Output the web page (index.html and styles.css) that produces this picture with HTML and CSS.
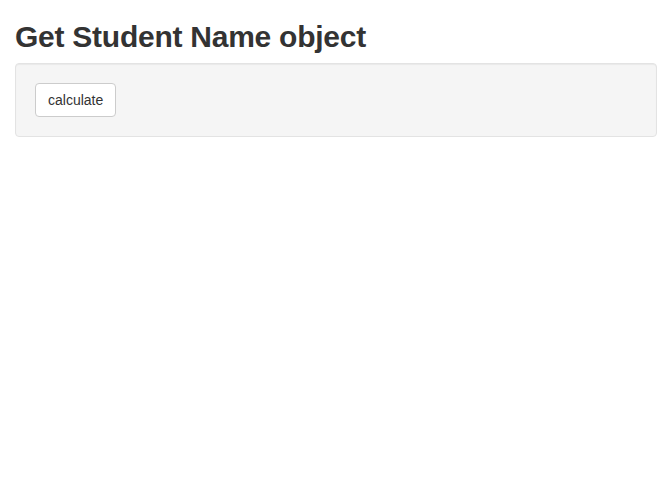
FILE: index.html
```html
<!DOCTYPE html>
<html>
<head>
<meta charset="utf-8">
<link rel="stylesheet" href="styles.css">
</head>
<body>
<div class="container">
  <h2 class="title">Get Student Name object</h2>
  <div class="well">
    <button class="btn" type="button">calculate</button>
  </div>
</div>
</body>
</html>
```
FILE: styles.css
```css
* { box-sizing: border-box; }
html, body { margin: 0; padding: 0; background: #fff; }
body {
  font-family: "Liberation Sans", Arial, sans-serif;
  font-size: 14px;
  line-height: 1.42857;
  color: #333;
}
.container { padding: 0 15px; }
.title {
  font-size: 30px;
  font-weight: bold;
  line-height: 33px;
  letter-spacing: -0.25px;
  margin: 20px 0 10px;
  color: #333;
}
.well {
  min-height: 20px;
  padding: 19px;
  background: #f5f5f5;
  border: 1px solid #e3e3e3;
  border-radius: 4px;
  box-shadow: inset 0 1px 1px rgba(0,0,0,.05);
}
.btn {
  display: inline-block;
  font-family: inherit;
  font-size: 14px;
  line-height: 20px;
  padding: 6px 12px;
  color: #333;
  background: #fff;
  border: 1px solid #ccc;
  border-radius: 4px;
  cursor: pointer;
  vertical-align: middle;
}
```
